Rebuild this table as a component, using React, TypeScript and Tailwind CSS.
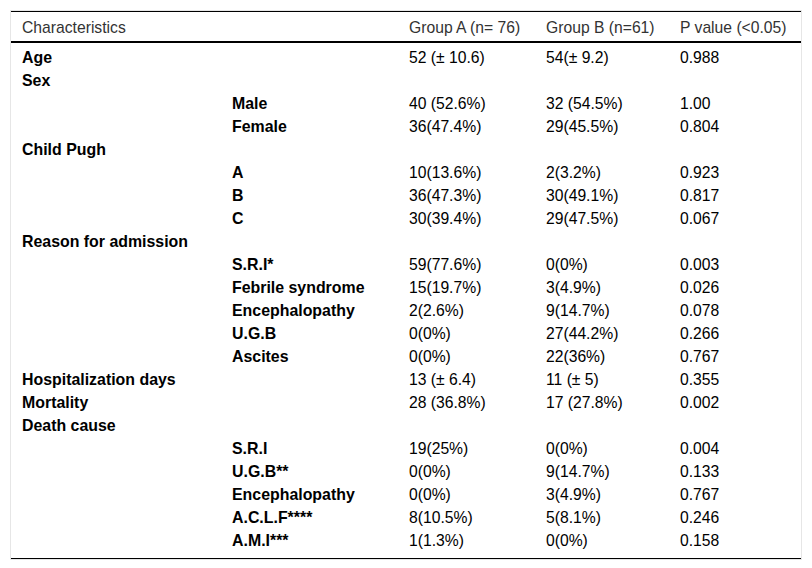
type Row = {
  label: string;
  sub?: boolean;
  a?: string;
  b?: string;
  p?: string;
};

const ROWS: Row[] = [
  { label: "Age", a: "52 (± 10.6)", b: "54(± 9.2)", p: "0.988" },
  { label: "Sex" },
  { label: "Male", sub: true, a: "40 (52.6%)", b: "32 (54.5%)", p: "1.00" },
  { label: "Female", sub: true, a: "36(47.4%)", b: "29(45.5%)", p: "0.804" },
  { label: "Child Pugh" },
  { label: "A", sub: true, a: "10(13.6%)", b: "2(3.2%)", p: "0.923" },
  { label: "B", sub: true, a: "36(47.3%)", b: "30(49.1%)", p: "0.817" },
  { label: "C", sub: true, a: "30(39.4%)", b: "29(47.5%)", p: "0.067" },
  { label: "Reason for admission" },
  { label: "S.R.I*", sub: true, a: "59(77.6%)", b: "0(0%)", p: "0.003" },
  { label: "Febrile syndrome", sub: true, a: "15(19.7%)", b: "3(4.9%)", p: "0.026" },
  { label: "Encephalopathy", sub: true, a: "2(2.6%)", b: "9(14.7%)", p: "0.078" },
  { label: "U.G.B", sub: true, a: "0(0%)", b: "27(44.2%)", p: "0.266" },
  { label: "Ascites", sub: true, a: "0(0%)", b: "22(36%)", p: "0.767" },
  { label: "Hospitalization days", a: "13 (± 6.4)", b: "11 (± 5)", p: "0.355" },
  { label: "Mortality", a: "28 (36.8%)", b: "17 (27.8%)", p: "0.002" },
  { label: "Death cause" },
  { label: "S.R.I", sub: true, a: "19(25%)", b: "0(0%)", p: "0.004" },
  { label: "U.G.B**", sub: true, a: "0(0%)", b: "9(14.7%)", p: "0.133" },
  { label: "Encephalopathy", sub: true, a: "0(0%)", b: "3(4.9%)", p: "0.767" },
  { label: "A.C.L.F****", sub: true, a: "8(10.5%)", b: "5(8.1%)", p: "0.246" },
  { label: "A.M.I***", sub: true, a: "1(1.3%)", b: "0(0%)", p: "0.158" },
];

export default function App() {
  return (
    <div className="min-h-[568px] w-[812px] bg-white pt-[10px] pl-[10px] font-['Liberation_Sans',Arial,sans-serif] text-[15.7px] text-black">
      <div className="w-[792px] border border-[#e6e6e6]">
        <div className="border-t border-b border-black pb-[6px]">
          <table className="w-full table-fixed border-collapse">
            <colgroup>
              <col className="w-[210px]" />
              <col className="w-[177px]" />
              <col className="w-[137px]" />
              <col className="w-[134px]" />
              <col />
            </colgroup>
            <thead>
              <tr className="h-[30px] border-b-2 border-black text-[#333]">
                <th className="pt-[3px] pl-[11px] text-left font-normal" colSpan={2}>
                  Characteristics
                </th>
                <th className="pt-[3px] pl-[11px] text-left font-normal">Group A (n= 76)</th>
                <th className="pt-[3px] pl-[11px] text-left font-normal">Group B (n=61)</th>
                <th className="pt-[3px] pl-[11px] text-left font-normal">P value (&lt;0.05)</th>
              </tr>
            </thead>
            <tbody>
              <tr className="h-[4px]" />
              {ROWS.map((r, i) => (
                <tr key={i} className="h-[23px] leading-[23px]">
                  <td className="pl-[11px] text-[15.9px] font-bold">{r.sub ? "" : r.label}</td>
                  <td className="pl-[11px] text-[15.9px] font-bold">{r.sub ? r.label : ""}</td>
                  <td className="pl-[11px]">{r.a ?? ""}</td>
                  <td className="pl-[11px]">{r.b ?? ""}</td>
                  <td className="pl-[11px]">{r.p ?? ""}</td>
                </tr>
              ))}
            </tbody>
          </table>
        </div>
      </div>
    </div>
  );
}
